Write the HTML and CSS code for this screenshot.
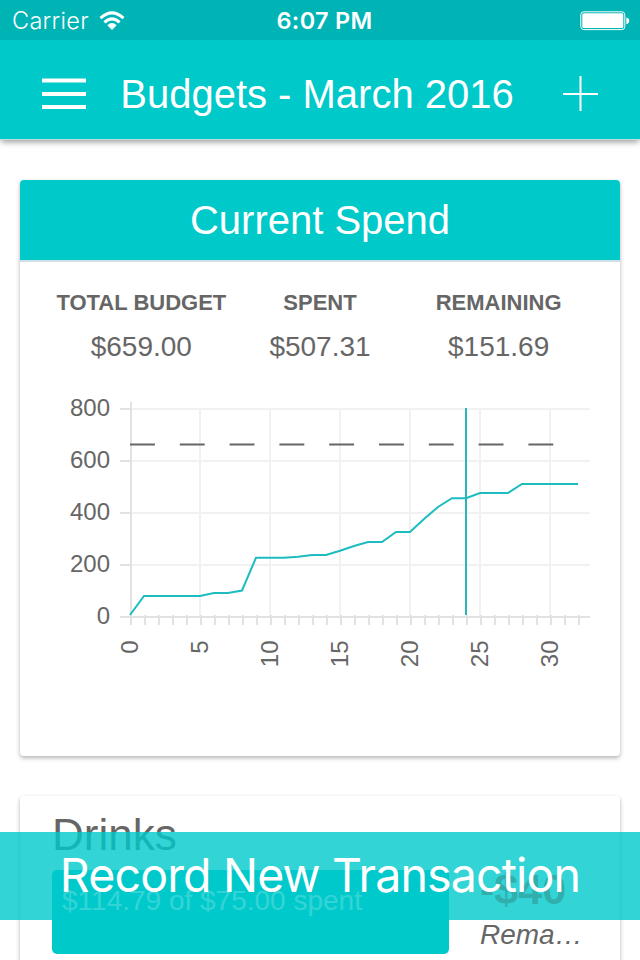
FILE: index.html
```html
<!DOCTYPE html>
<html lang="en">
<head>
<meta charset="utf-8">
<title>Budgets</title>
<link rel="stylesheet" href="styles.css">
</head>
<body>
<div class="screen">
  <div class="status">
    <div class="carrier"><span class="carrier-name">Carrier</span>
      <svg class="wifi" width="26" height="20" viewBox="0 0 26 20"><g fill="none" stroke="#fff" stroke-width="3"><path d="M1.5 7.2Q13-3.4 24.5 7.2"/><path d="M5.4 11.4Q13 4.2 20.6 11.4"/></g><path d="M8.3 14.2Q13 10 17.7 14.2L13 18.9Z" fill="#fff"/></svg>
    </div>
    <span class="clock">6:07 PM</span>
    <svg class="battery" width="50" height="20" viewBox="0 0 50 20"><rect x=".8" y=".8" width="44" height="17.8" rx="3" fill="none" stroke="#fff" stroke-width="1"/><rect x="2.3" y="2.3" width="41" height="14.8" rx="1.5" fill="#fff"/><path d="M46.3 6.5Q49.2 7 49.2 9.8T46.3 13.2Z" fill="#fff"/></svg>
  </div>
  <header class="navbar">
    <svg class="menu" width="44" height="32" viewBox="0 0 44 32"><path d="M0 2.5H44M0 16H44M0 29H44" stroke="#fff" stroke-width="4"/></svg>
    <h1 class="title">Budgets - March 2016</h1>
    <svg class="add" width="36" height="36" viewBox="0 0 36 36"><path d="M0 18H35M17.5 0V35" stroke="#fff" stroke-width="2"/></svg>
  </header>
  <main class="content">
    <section class="card spend">
      <h2 class="card-title"><span>Current Spend</span></h2>
      <div class="totals">
        <div class="total"><b>TOTAL BUDGET</b><span>$659.00</span></div>
        <div class="total"><b>SPENT</b><span>$507.31</span></div>
        <div class="total"><b>REMAINING</b><span>$151.69</span></div>
      </div>
      <svg class="chart" width="600" height="320" viewBox="20 380 600 320">
        <path class="grid" d="M132 409H590M132 461H590M132 513H590M132 565H590M200 408V616M270 408V616M340 408V616M410 408V616M480 408V616M550 408V616"/>
        <path class="axis" d="M131 402V625M120 617H590M120 409H130M120 461H130M120 513H130M120 565H130M145 615V625M159 615V625M173 615V625M187 615V625M201 615V625M215 615V625M229 615V625M243 615V625M257 615V625M271 615V625M285 615V625M299 615V625M313 615V625M327 615V625M341 615V625M355 615V625M369 615V625M383 615V625M397 615V625M411 615V625M425 615V625M439 615V625M453 615V625M467 615V625M481 615V625M495 615V625M509 615V625M523 615V625M537 615V625M551 615V625M565 615V625M579 615V625"/>
        <path class="limit" d="M130 444.4H554"/>
        <path class="series" d="M130 615L144 596H200L214 593H228L242 590.5L256 557.7H284L298 556.7L312 555H326L340 550.7L354 546L368 542H382L396 532H410L424 519L438 507L452 498.2H466L480 493H508L522 484H578"/>
        <path class="today" d="M466 408V615"/>
        <g class="labels" text-anchor="end">
          <text x="110" y="416">800</text><text x="110" y="468">600</text><text x="110" y="520">400</text><text x="110" y="572">200</text><text x="110" y="624">0</text>
          <text transform="translate(138 640.5) rotate(-90)">0</text><text transform="translate(208 640.5) rotate(-90)">5</text><text transform="translate(278 640.5) rotate(-90)">10</text><text transform="translate(348 640.5) rotate(-90)">15</text><text transform="translate(418 640.5) rotate(-90)">20</text><text transform="translate(488 640.5) rotate(-90)">25</text><text transform="translate(558 640.5) rotate(-90)">30</text>
        </g>
      </svg>
    </section>
    <section class="card category">
      <h3 class="category-name">Drinks</h3>
      <div class="category-row">
        <div class="meter">$114.79 of $75.00 spent</div>
        <div class="left"><b>-$40</b><i>Rema…</i></div>
      </div>
    </section>
  </main>
  <div class="record"><span>Record New Transaction</span></div>
</div>
</body>
</html>
```
FILE: styles.css
```css
* { box-sizing: border-box; }
body { margin: 0; background: #fff; color: #666; font-family: "Liberation Sans", sans-serif; }
.screen { position: relative; width: 640px; height: 960px; overflow: hidden; }
svg { display: block; flex: none; }
h1, h2, h3 { margin: 0; font-weight: 400; }

.status { position: relative; z-index: 1; display: grid; grid-template-columns: 1fr auto 1fr; align-items: center; height: 40px; padding: 1px 10px 0 12px; background: #00b3b4; color: #fff; font: 24px/39px Inter, sans-serif; white-space: nowrap; }
.carrier { display: flex; align-items: center; gap: 10px; }
.carrier-name { font-size: 23.5px; font-weight: 350; letter-spacing: .3px; }
.clock { padding-left: 7px; font-size: 23.5px; font-weight: 600; letter-spacing: .3px; }
.battery { justify-self: end; }

.navbar { display: flex; align-items: center; height: 99px; padding: 9px 41px 0 42px; background: #00c9ca; color: #fff; box-shadow: 0 1px 0 #b9dcdd, 0 4px 6px -1px rgba(0, 0, 0, .4); }
.title { flex: 1; padding-right: 15px; text-align: center; font-size: 40px; line-height: 48px; white-space: nowrap; }

.content { display: flex; flex-direction: column; gap: 40px; padding: 41px 20px 0; }
.card { background: #fff; border-radius: 4px; box-shadow: 0 2px 4px rgba(0, 0, 0, .3); }
.spend { height: 576px; overflow: hidden; }
.card-title { height: 82px; border-bottom: 2px solid #cfe1e6; background: #00c9ca; color: #fff; font-size: 40px; line-height: 81px; text-align: center; }
.totals { display: grid; grid-template-columns: repeat(3, 1fr); height: 118px; padding: 27px 32px 0; text-align: center; }
.total { display: flex; flex-direction: column; white-space: nowrap; }
.total b { font-size: 22px; line-height: 28px; }
.total span { margin-top: 14px; font-size: 28px; line-height: 32px; }

.grid { fill: none; stroke: #f1f1f1; stroke-width: 2; }
.axis { fill: none; stroke: #e2e2e2; stroke-width: 2; }
.limit { fill: none; stroke: #666; stroke-width: 2; stroke-dasharray: 24.9 24.9; }
.series, .today { fill: none; stroke: #1dbcc0; stroke-width: 2; }
.today { stroke: #2ab5b8; }
.labels { fill: #666; font-size: 24px; }

.category { height: 240px; padding: 14px 32px; }
.category-name { font-size: 44px; line-height: 50px; }
.category-row { display: flex; margin-top: 10px; }
.meter { width: 397px; height: 84px; padding: 14px 10px; border-radius: 5px; background: #00c9ca; color: #fff; font-size: 28px; line-height: 34px; white-space: nowrap; }
.left { display: flex; flex: 1; flex-direction: column; padding-left: 31px; }
.left b { color: #ef473a; font-size: 43px; line-height: 38px; }
.left i { margin-top: 10px; font-size: 28px; line-height: 34px; }

.record { position: absolute; left: 0; top: 832px; width: 640px; height: 88px; background: rgba(0, 201, 202, .8); color: #fff; font: 400 46.5px/87px Inter, sans-serif; letter-spacing: -.85px; text-align: center; white-space: nowrap; }
```
